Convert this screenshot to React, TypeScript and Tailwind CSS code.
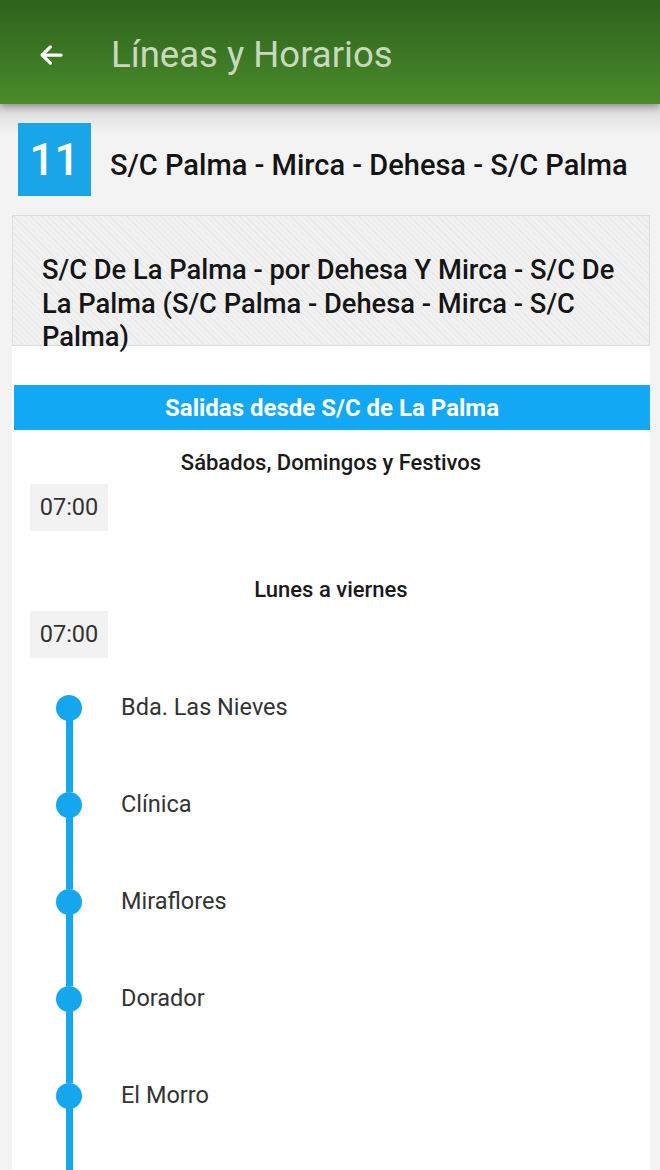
import React from 'react';

const stops = ['Bda. Las Nieves', 'Clínica', 'Miraflores', 'Dorador', 'El Morro'];

const ArrowLeft: React.FC = () => (
  <svg width="30" height="30" viewBox="0 0 24 24" fill="none" stroke="#ffffff" strokeWidth="2.6" strokeLinecap="round" strokeLinejoin="round">
    <path d="M20 12H5" />
    <path d="M11.5 5.5L5 12l6.5 6.5" />
  </svg>
);

const TimeChip: React.FC<{ time: string }> = ({ time }) => (
  <div className="ml-[18px] w-[78px] h-[47px] bg-[#f2f2f2] flex items-center justify-center text-[23.5px] text-[#333333]">
    {time}
  </div>
);

export default function App() {
  return (
    <div className="w-[660px] h-[1170px] overflow-hidden bg-[#f3f3f3] font-['Roboto',sans-serif]">
      {/* toolbar */}
      <div className="h-[104px] bg-gradient-to-b from-[#2d621c] to-[#4a8b2a] flex items-center pl-[36px] pt-[6px] relative z-10 shadow-[0_3px_8px_rgba(0,0,0,0.35)]">
        <ArrowLeft />
        <span className="ml-[45px] text-[36.5px] text-[#c9d8bf]">Líneas y Horarios</span>
      </div>

      <div className="bg-gradient-to-b from-[#d9d9d9] to-[#f3f3f3] to-[30px]">
        {/* route header */}
        <div className="flex items-center pt-[19px] pl-[18px] pb-[19px]">
          <div className="w-[73px] h-[73px] bg-[#1ba5e9] flex items-center justify-center text-white text-[44px] font-medium">
            11
          </div>
          <span className="ml-[19px] mt-[12px] text-[29px] font-medium text-[#141414]">S/C Palma - Mirca - Dehesa - S/C Palma</span>
        </div>
      </div>

      {/* card */}
      <div className="mx-[12px] mr-[10px] bg-white h-[960px]">
        <div className="border border-[#dddddd] bg-[repeating-linear-gradient(45deg,#f1f1f1_0px,#f1f1f1_3px,#e9e9e9_3px,#e9e9e9_4px)] h-[131px] pl-[29px] pr-[8px] pt-[38px] text-[27.3px] font-medium leading-[33.5px] text-[#151515] whitespace-nowrap overflow-visible">
          S/C De La Palma - por Dehesa Y Mirca - S/C De
          <br />
          La Palma (S/C Palma - Dehesa - Mirca - S/C
          <br />
          Palma)
        </div>

        <div className="mt-[39px] ml-[2px] h-[45px] bg-[#12a8f4] flex items-center justify-center text-white text-[24px] font-bold">
          Salidas desde S/C de La Palma
        </div>

        <div className="mt-[16px] text-center text-[22px] font-medium text-[#1a1a1a]">Sábados, Domingos y Festivos</div>
        <div className="mt-[5px]">
          <TimeChip time="07:00" />
        </div>

        <div className="mt-[42px] text-center text-[22px] font-medium text-[#1a1a1a]">Lunes a viernes</div>
        <div className="mt-[5px]">
          <TimeChip time="07:00" />
        </div>

        {/* stops timeline */}
        <div className="mt-[37px] flex flex-col">
          {stops.map((stop) => (
            <div key={stop} className="flex h-[97px]">
              <div className="w-[26px] ml-[44px] flex flex-col items-center">
                <div className="w-[26px] h-[26px] rounded-full bg-[#16a6ee] shrink-0" />
                <div className="w-[7px] flex-1 bg-[#16a6ee] -mt-[1px]" />
              </div>
              <div className="ml-[39px] h-[26px] flex items-center text-[23.5px] text-[#333333]">{stop}</div>
            </div>
          ))}
        </div>
      </div>
    </div>
  );
}
